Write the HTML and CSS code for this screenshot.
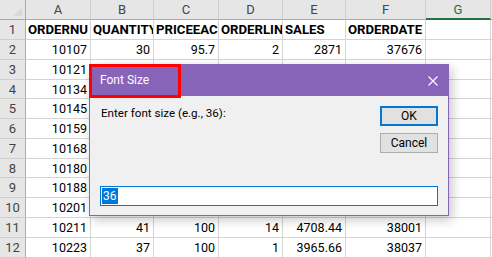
FILE: index.html
```html
<!DOCTYPE html>
<html>
<head>
<meta charset="utf-8">
<link rel="stylesheet" href="styles.css">
</head>
<body>
<div class="app">
  <div class="sheet">
    <div class="cell corner"></div>
    <div class="cell colhead">A</div>
    <div class="cell colhead">B</div>
    <div class="cell colhead">C</div>
    <div class="cell colhead">D</div>
    <div class="cell colhead">E</div>
    <div class="cell colhead">F</div>
    <div class="cell colhead sel">G</div>
    <div class="cell colhead blank"></div>

    <div class="cell rowhead">1</div>
    <div class="cell hdr">ORDERNU</div>
    <div class="cell hdr">QUANTITY</div>
    <div class="cell hdr">PRICEEAC</div>
    <div class="cell hdr">ORDERLIN</div>
    <div class="cell hdr">SALES</div>
    <div class="cell hdr">ORDERDATE</div>
    <div class="cell"></div>
    <div class="cell"></div>

    <div class="cell rowhead">2</div>
    <div class="cell num">10107</div>
    <div class="cell num">30</div>
    <div class="cell num">95.7</div>
    <div class="cell num">2</div>
    <div class="cell num">2871</div>
    <div class="cell num">37676</div>
    <div class="cell"></div>
    <div class="cell"></div>

    <div class="cell rowhead">3</div>
    <div class="cell num">10121</div>
    <div class="cell"></div><div class="cell"></div><div class="cell"></div><div class="cell"></div><div class="cell"></div><div class="cell"></div><div class="cell"></div>

    <div class="cell rowhead">4</div>
    <div class="cell num">10134</div>
    <div class="cell"></div><div class="cell"></div><div class="cell"></div><div class="cell"></div><div class="cell"></div><div class="cell"></div><div class="cell"></div>

    <div class="cell rowhead">5</div>
    <div class="cell num">10145</div>
    <div class="cell"></div><div class="cell"></div><div class="cell"></div><div class="cell"></div><div class="cell"></div><div class="cell"></div><div class="cell"></div>

    <div class="cell rowhead">6</div>
    <div class="cell num">10159</div>
    <div class="cell"></div><div class="cell"></div><div class="cell"></div><div class="cell"></div><div class="cell"></div><div class="cell"></div><div class="cell"></div>

    <div class="cell rowhead">7</div>
    <div class="cell num">10168</div>
    <div class="cell"></div><div class="cell"></div><div class="cell"></div><div class="cell"></div><div class="cell"></div><div class="cell"></div><div class="cell"></div>

    <div class="cell rowhead">8</div>
    <div class="cell num">10180</div>
    <div class="cell"></div><div class="cell"></div><div class="cell"></div><div class="cell"></div><div class="cell"></div><div class="cell"></div><div class="cell"></div>

    <div class="cell rowhead">9</div>
    <div class="cell num">10188</div>
    <div class="cell"></div><div class="cell"></div><div class="cell"></div><div class="cell"></div><div class="cell"></div><div class="cell"></div><div class="cell"></div>

    <div class="cell rowhead">10</div>
    <div class="cell num">10201</div>
    <div class="cell"></div><div class="cell"></div><div class="cell"></div><div class="cell"></div><div class="cell"></div><div class="cell"></div><div class="cell"></div>

    <div class="cell rowhead">11</div>
    <div class="cell num">10211</div>
    <div class="cell num">41</div>
    <div class="cell num">100</div>
    <div class="cell num">14</div>
    <div class="cell num">4708.44</div>
    <div class="cell num">38001</div>
    <div class="cell"></div>
    <div class="cell"></div>

    <div class="cell rowhead">12</div>
    <div class="cell num">10223</div>
    <div class="cell num">37</div>
    <div class="cell num">100</div>
    <div class="cell num">1</div>
    <div class="cell num">3965.66</div>
    <div class="cell num">38037</div>
    <div class="cell"></div>
    <div class="cell"></div>
  </div>

  <div class="dialog">
    <div class="titlebar">
      <span class="title">Font Size</span>
      <svg class="close" width="10" height="10" viewBox="0 0 10 10">
        <path d="M0.5 0.5 L9.5 9.5 M9.5 0.5 L0.5 9.5" stroke="#ffffff" stroke-width="1.1" fill="none"/>
      </svg>
    </div>
    <div class="highlight"></div>
    <div class="body">
      <div class="top">
        <div class="prompt">Enter font size (e.g., 36):</div>
        <div class="buttons">
          <div class="btn ok">OK</div>
          <div class="btn">Cancel</div>
        </div>
      </div>
      <div class="input"><span class="selected">36</span></div>
    </div>
  </div>
</div>
</body>
</html>
```

FILE: styles.css
```css
* { box-sizing: border-box; }

html, body {
  margin: 0;
  padding: 0;
  background: #ffffff;
}

.app {
  position: relative;
  width: 492px;
  height: 258px;
  overflow: hidden;
}

.sheet {
  display: grid;
  grid-template-columns: 26px 65px 63px 65px 64px 63px 80px 65px 1fr;
  grid-template-rows: 20px 20px 20px 20px 19px 20px 20px 20px 19px 20px 20px 20px 20px;
  font-family: Roboto, "Liberation Sans", sans-serif;
  font-size: 12.5px;
  color: #000;
}

.cell {
  border-right: 1px solid #d4d4d4;
  border-bottom: 1px solid #d4d4d4;
  overflow: hidden;
  white-space: nowrap;
  display: flex;
  align-items: center;
  padding: 0 3px;
}

.corner {
  background:
    linear-gradient(135deg, transparent 62%, #d9d9d9 62%) no-repeat right 3px bottom 3px / 11px 11px,
    #e6e6e6;
  border-right: 1px solid #ababab;
  border-bottom: 1px solid #ababab;
}

.colhead {
  background: #e6e6e6;
  color: #444;
  justify-content: center;
  border-right: 1px solid #cfcfcf;
  border-bottom: 1px solid #ababab;
  font-size: 13px;
}

.colhead.sel {
  color: #217346;
  border-bottom: 2px solid #217346;
}

.colhead.blank {
  border-right: none;
}

.rowhead {
  background: #e6e6e6;
  color: #444;
  justify-content: center;
  border-right: 1px solid #ababab;
  border-bottom: 1px solid #cfcfcf;
  font-size: 13px;
  padding: 0;
}

.hdr {
  font-weight: bold;
  font-size: 13.2px;
  padding-left: 2px;
}

.num {
  justify-content: flex-end;
}

.dialog {
  position: absolute;
  left: 89px;
  top: 64px;
  width: 360px;
  height: 152px;
  border: 1px solid #8764b8;
  background: #f0f0f0;
  box-shadow: 3px 4px 10px rgba(0, 0, 0, 0.22);
  display: flex;
  flex-direction: column;
  font-family: Roboto, "Liberation Sans", sans-serif;
  font-size: 12px;
  color: #000;
}

.titlebar {
  height: 32px;
  margin-top: -1px;
  background: #8764b8;
  display: flex;
  align-items: center;
  justify-content: space-between;
  padding: 0 10px 0 10px;
  color: #fff;
}

.title {
  font-size: 12px;
}

.close {
  display: block;
  margin-top: 1px;
}

.highlight {
  position: absolute;
  left: -1px;
  top: -1px;
  width: 92px;
  height: 34px;
  border: 3px solid #ff0000;
}

.body {
  flex: 1;
  display: flex;
  flex-direction: column;
  padding: 10px 10px 0 10px;
}

.top {
  display: flex;
  justify-content: space-between;
}

.prompt {
  padding-left: 1px;
  font-size: 11.6px;
}

.buttons {
  display: flex;
  flex-direction: column;
  gap: 7px;
  width: 58px;
}

.btn {
  height: 20px;
  background: #e1e1e1;
  border: 1px solid #adadad;
  display: flex;
  align-items: center;
  justify-content: center;
}

.btn.ok {
  border: 2px solid #0078d7;
}

.input {
  margin-top: 33px;
  height: 20px;
  background: #ffffff;
  border: 1px solid #0078d7;
  display: flex;
  align-items: center;
  padding-left: 1px;
}

.selected {
  background: #0078d7;
  color: #ffffff;
  line-height: 16px;
  padding: 0 1px;
}
```
